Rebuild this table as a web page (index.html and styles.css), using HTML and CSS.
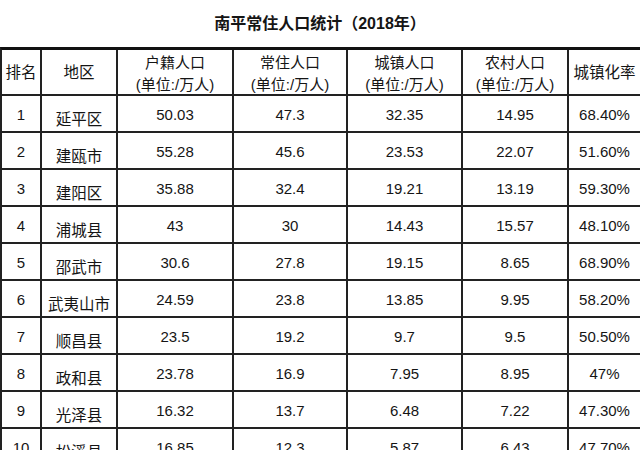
FILE: index.html
```html
<!DOCTYPE html>
<html lang="zh-CN">
<head>
<meta charset="utf-8">
<title>南平常住人口统计（2018年）</title>
<link rel="stylesheet" href="styles.css">
</head>
<body>
<h1 class="title">南平常住人口统计（2018年）</h1>
<div class="grid">
  <div class="cell head">排名</div>
  <div class="cell head">地区</div>
  <div class="cell head two">户籍人口<br>(单位:/万人)</div>
  <div class="cell head two">常住人口<br>(单位:/万人)</div>
  <div class="cell head two">城镇人口<br>(单位:/万人)</div>
  <div class="cell head two">农村人口<br>(单位:/万人)</div>
  <div class="cell head last">城镇化率</div>

  <div class="cell">1</div><div class="cell name">延平区</div><div class="cell">50.03</div><div class="cell">47.3</div><div class="cell">32.35</div><div class="cell">14.95</div><div class="cell last">68.40%</div>
  <div class="cell">2</div><div class="cell name">建瓯市</div><div class="cell">55.28</div><div class="cell">45.6</div><div class="cell">23.53</div><div class="cell">22.07</div><div class="cell last">51.60%</div>
  <div class="cell">3</div><div class="cell name">建阳区</div><div class="cell">35.88</div><div class="cell">32.4</div><div class="cell">19.21</div><div class="cell">13.19</div><div class="cell last">59.30%</div>
  <div class="cell">4</div><div class="cell name">浦城县</div><div class="cell">43</div><div class="cell">30</div><div class="cell">14.43</div><div class="cell">15.57</div><div class="cell last">48.10%</div>
  <div class="cell">5</div><div class="cell name">邵武市</div><div class="cell">30.6</div><div class="cell">27.8</div><div class="cell">19.15</div><div class="cell">8.65</div><div class="cell last">68.90%</div>
  <div class="cell">6</div><div class="cell name">武夷山市</div><div class="cell">24.59</div><div class="cell">23.8</div><div class="cell">13.85</div><div class="cell">9.95</div><div class="cell last">58.20%</div>
  <div class="cell">7</div><div class="cell name">顺昌县</div><div class="cell">23.5</div><div class="cell">19.2</div><div class="cell">9.7</div><div class="cell">9.5</div><div class="cell last">50.50%</div>
  <div class="cell">8</div><div class="cell name">政和县</div><div class="cell">23.78</div><div class="cell">16.9</div><div class="cell">7.95</div><div class="cell">8.95</div><div class="cell last">47%</div>
  <div class="cell">9</div><div class="cell name">光泽县</div><div class="cell">16.32</div><div class="cell">13.7</div><div class="cell">6.48</div><div class="cell">7.22</div><div class="cell last">47.30%</div>
  <div class="cell">10</div><div class="cell name">松溪县</div><div class="cell">16.85</div><div class="cell">12.3</div><div class="cell">5.87</div><div class="cell">6.43</div><div class="cell last">47.70%</div>
</div>
</body>
</html>
```

FILE: styles.css
```css
html, body {
  margin: 0;
  padding: 0;
  background: #ffffff;
  overflow: hidden;
}

body {
  width: 640px;
  height: 450px;
  font-family: "Liberation Sans", "Noto Sans CJK SC", sans-serif;
  color: #151515;
}

.title {
  margin: 0;
  height: 47px;
  box-sizing: border-box;
  padding-top: 13px;
  line-height: 22px;
  font-size: 16px;
  font-weight: bold;
  text-align: center;
}

.grid {
  display: grid;
  grid-template-columns: 40px 76px 116px 114px 115px 106px 71px;
  grid-template-rows: 46px repeat(10, 37px);
  border-top: 3px solid #111;
  border-left: 2px solid #222;
  width: 640px;
  box-sizing: border-box;
}

.cell {
  box-sizing: border-box;
  border-right: 2px solid #222;
  border-bottom: 2px solid #222;
  display: flex;
  align-items: center;
  justify-content: center;
  text-align: center;
  font-size: 15px;
  line-height: 20px;
  padding-top: 2px;
  white-space: nowrap;
}

.cell.last {
  border-right: none;
}

.cell.name {
  align-items: flex-end;
  padding-top: 0;
  padding-bottom: 1px;
  font-size: 15.5px;
}

.cell.head {
  padding-top: 2px;
  font-size: 15.5px;
}

.cell.two {
  line-height: 22px;
  padding-top: 4px;
  font-size: 15px;
}
```
